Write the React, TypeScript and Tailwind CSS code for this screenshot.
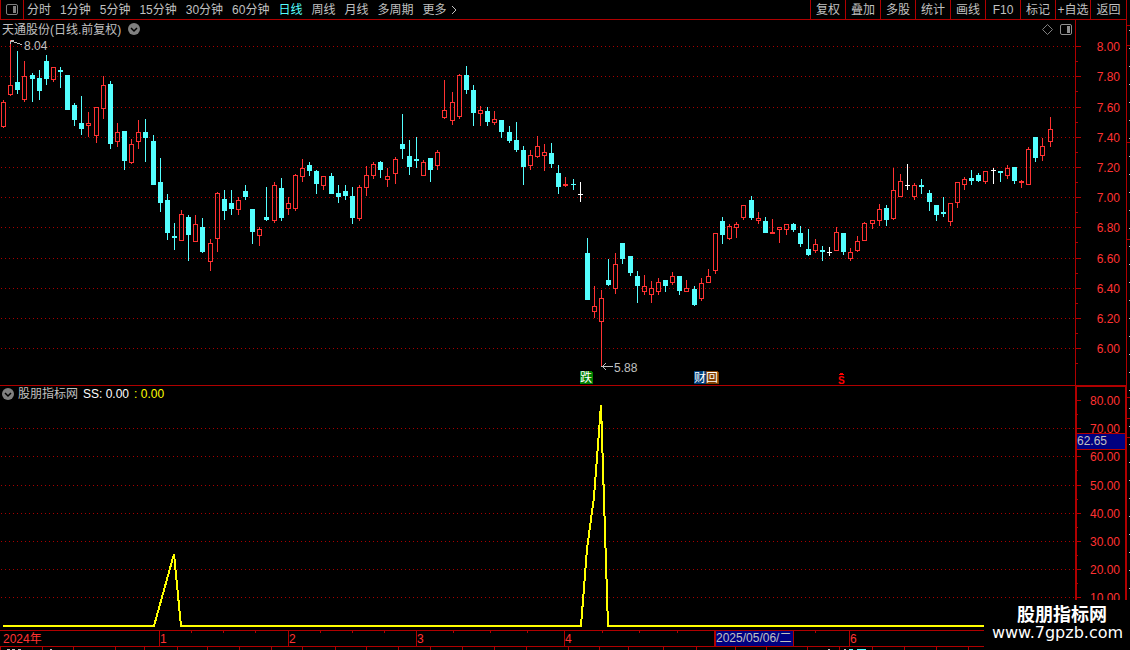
import { useState } from "react";

type Kind = "up" | "down" | "flat";
// high, body top, body bottom, low (chart pixels)
type Candle = [number, number, number, number, Kind];

const FONT =
  "font-['Liberation_Sans','Noto_Sans_CJK_SC',sans-serif] text-[12px]";

const CANDLES: Candle[] = [
  [100, 102, 127, 128, "up"], [40, 85, 95, 96, "up"], [51, 82, 90, 94, "down"], [61, 76, 100, 102, "up"],
  [73, 75, 79, 102, "down"], [70, 78, 91, 100, "down"], [55, 61, 79, 85, "down"], [67, 67, 80, 82, "up"],
  [67, 70, 72, 88, "down"], [75, 75, 110, 110, "down"], [103, 105, 120, 126, "down"], [96, 123, 129, 135, "down"],
  [112, 123, 126, 137, "up"], [107, 107, 136, 143, "up"], [76, 85, 109, 119, "up"], [81, 84, 144, 149, "down"],
  [123, 132, 142, 147, "up"], [131, 131, 161, 170, "down"], [139, 144, 163, 164, "up"], [120, 132, 142, 149, "up"],
  [119, 132, 138, 162, "down"], [135, 141, 185, 185, "down"], [158, 182, 203, 212, "down"], [194, 200, 233, 240, "down"],
  [223, 236, 238, 250, "down"], [210, 214, 241, 241, "up"], [215, 217, 235, 261, "down"], [215, 224, 242, 242, "up"],
  [218, 227, 252, 253, "down"], [239, 243, 262, 271, "up"], [192, 193, 239, 252, "up"], [190, 199, 211, 220, "down"],
  [190, 203, 209, 215, "down"], [197, 200, 210, 215, "up"], [185, 191, 197, 200, "down"], [209, 209, 232, 244, "down"],
  [227, 229, 236, 246, "up"], [187, 217, 220, 221, "down"], [182, 185, 221, 223, "up"], [178, 188, 218, 221, "down"],
  [197, 203, 209, 215, "up"], [174, 175, 209, 211, "up"], [159, 168, 177, 182, "up"], [162, 165, 171, 176, "down"],
  [170, 171, 184, 194, "down"], [176, 176, 186, 190, "up"], [173, 176, 194, 194, "down"], [185, 193, 197, 203, "down"],
  [185, 191, 196, 200, "down"], [187, 196, 218, 224, "down"], [185, 187, 219, 221, "up"], [166, 175, 188, 196, "up"],
  [162, 164, 176, 179, "up"], [161, 162, 170, 178, "down"], [168, 176, 180, 187, "up"], [157, 159, 174, 184, "up"],
  [114, 144, 149, 159, "down"], [140, 156, 167, 175, "down"], [137, 159, 161, 168, "down"], [160, 162, 176, 176, "up"],
  [158, 158, 170, 182, "down"], [150, 152, 166, 170, "up"], [80, 110, 118, 119, "up"], [92, 102, 121, 125, "up"],
  [74, 75, 117, 119, "up"], [66, 75, 90, 94, "down"], [85, 90, 113, 126, "down"], [106, 110, 114, 126, "up"],
  [107, 111, 122, 126, "down"], [111, 119, 123, 125, "up"], [120, 120, 132, 138, "down"], [126, 132, 141, 143, "down"],
  [122, 140, 150, 152, "down"], [146, 150, 167, 185, "down"], [150, 155, 166, 170, "up"], [136, 146, 157, 158, "up"],
  [144, 152, 156, 171, "up"], [143, 153, 164, 168, "down"], [165, 173, 187, 194, "down"], [177, 184, 186, 187, "up"],
  [179, 184, 185, 190, "down"], [182, 194, 195, 202, "flat"], [238, 253, 300, 300, "down"], [286, 306, 312, 318, "up"],
  [290, 298, 322, 367, "up"], [259, 280, 285, 286, "down"], [253, 264, 289, 294, "up"], [243, 243, 259, 264, "down"],
  [256, 256, 273, 276, "down"], [271, 276, 286, 303, "down"], [275, 286, 292, 295, "up"], [281, 288, 295, 303, "up"],
  [278, 282, 292, 295, "up"], [280, 280, 286, 292, "down"], [272, 276, 283, 285, "up"], [276, 276, 291, 295, "down"],
  [280, 288, 292, 292, "up"], [286, 289, 305, 306, "down"], [278, 283, 299, 301, "up"], [269, 276, 283, 283, "up"],
  [233, 233, 271, 274, "up"], [217, 221, 235, 244, "down"], [224, 226, 239, 240, "up"], [222, 224, 228, 238, "up"],
  [205, 205, 218, 220, "up"], [196, 200, 218, 220, "down"], [212, 218, 221, 224, "up"], [217, 221, 233, 233, "down"],
  [219, 232, 234, 234, "up"], [227, 227, 230, 243, "up"], [224, 224, 230, 235, "up"], [223, 224, 230, 232, "down"],
  [226, 233, 244, 247, "down"], [229, 249, 255, 256, "down"], [239, 244, 251, 253, "up"], [246, 250, 252, 261, "down"],
  [247, 252, 253, 256, "flat"], [227, 232, 251, 251, "up"], [233, 233, 252, 255, "down"], [248, 252, 259, 261, "up"],
  [236, 241, 251, 252, "up"], [222, 223, 241, 241, "up"], [220, 220, 224, 229, "up"], [204, 209, 221, 226, "up"],
  [205, 208, 220, 226, "down"], [168, 190, 219, 220, "up"], [174, 181, 197, 197, "up"], [164, 185, 186, 190, "flat"],
  [183, 185, 197, 200, "up"], [179, 185, 187, 194, "down"], [190, 193, 202, 211, "down"], [205, 205, 215, 221, "down"],
  [197, 212, 214, 217, "down"], [203, 203, 222, 226, "up"], [182, 182, 203, 208, "up"], [177, 179, 185, 190, "up"],
  [170, 178, 181, 185, "down"], [173, 175, 181, 182, "down"], [171, 171, 182, 184, "up"], [168, 170, 171, 184, "flat"],
  [171, 171, 173, 182, "down"], [165, 168, 176, 179, "up"], [167, 167, 181, 184, "down"], [180, 181, 183, 188, "up"],
  [147, 149, 185, 185, "up"], [137, 137, 158, 162, "down"], [138, 146, 156, 161, "up"], [117, 129, 142, 147, "up"],
];

const COLORS = { up: "#ff3232", down: "#54ffff", flat: "#ffffff" };

const PRICE_TICKS: [number, string][] = [
  [46, "8.00"], [76, "7.80"], [107, "7.60"], [137, "7.40"], [167, "7.20"], [197, "7.00"],
  [227, "6.80"], [258, "6.60"], [288, "6.40"], [318, "6.20"], [348, "6.00"],
];

const VALUE_TICKS: [number, string][] = [
  [400, "80.00"], [428, "70.00"], [456, "60.00"], [485, "50.00"],
  [513, "40.00"], [541, "30.00"], [569, "20.00"], [597, "10.00"],
];

const MINUTES = ["分时", "1分钟", "5分钟", "15分钟", "30分钟", "60分钟"];
const PERIODS = ["日线", "周线", "月线", "多周期"];
const TOOLS = ["复权", "叠加", "多股", "统计", "画线", "F10", "标记", "+自选", "返回"];

const MONTHS: [number, string][] = [
  [159, "1"], [288, "2"], [416, "3"], [564, "4"], [714, ""], [849, "6"],
];
const WEEKS = [191, 223, 255, 320, 352, 384, 453, 490, 527, 602, 639, 677, 815];
const FOOTER = [0, 42, 73, 115, 144, 177, 207, 239, 271, 302, 335, 366, 398, 430, 462, 494, 526, 568, 599, 628, 663, 696, 735, 766, 807, 839, 872, 904, 936, 968];

function PanelIcon({ className }: { className: string }) {
  return (
    <svg width="12" height="11" className={className} fill="none" stroke="currentColor">
      <rect x="0.5" y="0.5" width="11" height="10" rx="1.5" />
      <rect x="7" y="2" width="3" height="7" fill="currentColor" stroke="none" />
    </svg>
  );
}

function CollapseButton({ label }: { label: string }) {
  return (
    <button aria-label={label} className="shrink-0">
      <svg width="12" height="12" className="block">
        <circle cx="6" cy="6" r="6" fill="#808080" />
        <path d="M3 5l3 3 3-3" fill="none" stroke="#000" strokeWidth="1.5" />
      </svg>
    </button>
  );
}

function GridLine({ y }: { y: number }) {
  return (
    <line x1="1" x2="100%" y1={y + 0.5} y2={y + 0.5} stroke="#a80000" strokeDasharray="1 3" />
  );
}

function CandleBar({ candle, index }: { candle: Candle; index: number }) {
  const [high, top, bottom, low, kind] = candle;
  const x = Math.floor(3.56 + 7.119 * index);
  const color = COLORS[kind];

  if (kind === "up" && bottom - top > 2) {
    return (
      <g fill={color}>
        <rect x={x} y={high} width="1" height={top - high} />
        <rect x={x} y={bottom} width="1" height={low - bottom} />
        <rect x={x - 1.5} y={top + 0.5} width="4" height={bottom - top - 1} fill="none" stroke={color} />
      </g>
    );
  }
  return (
    <g fill={color}>
      <rect x={x} y={high} width="1" height={low - high} />
      <rect x={x - 2} y={top} width="5" height={bottom - top} />
    </g>
  );
}

function Badge({ x, text, color }: { x: number; text: string; color: string }) {
  return (
    <g>
      <path d={`M${x} 371h11l2 2v11h-13z`} fill={color} />
      <text x={x} y="382" fill="#fff">{text}</text>
    </g>
  );
}

function PriceChart() {
  return (
    <svg className="block h-[347px] w-full" shapeRendering="crispEdges" role="img" aria-label="日线">
      <g transform="translate(0 -38)">
        {PRICE_TICKS.map(([y]) => <GridLine key={y} y={y} />)}
        {CANDLES.map((c, i) => <CandleBar key={i} candle={c} index={i} />)}

        {/* highest and lowest price */}
        <g fill="#c0c0c0">
          <path d="M11 40h3v1h-3zM10 41h4v1h-4zM10 42h1v2h-1zM14 42h3v1h-3zM17 43h3v1h-3zM20 44h2v1h-2z" />
          <path d="M601 366h12v1h-12zM603 365h1v3h-1zM604 364h1v1h-1zM604 368h1v1h-1zM605 363h1v1h-1zM605 369h1v1h-1z" />
        </g>
        <text x="24" y="50" fill="#c0c0c0">8.04</text>
        <text x="614" y="372" fill="#c0c0c0">5.88</text>

        {/* event markers */}
        <Badge x={580} text="跌" color="#008000" />
        <Badge x={694} text="财" color="#003c78" />
        <Badge x={706} text="回" color="#804000" />
        <path d="M839 375v-1h1v-1h3v1h1v1z" fill="#ff0000" />
        <text x="838" y="384" fill="#ff0000" className="text-[10px] font-bold">S</text>
      </g>
    </svg>
  );
}

function PriceAxis() {
  return (
    <svg className="block h-[365px] w-full" shapeRendering="crispEdges">
      <g transform="translate(0 -20)">
        {PRICE_TICKS.map(([y, label]) => (
          <g key={y} fill="#b00000">
            <rect y={y} width="5" height="1" />
            <rect y={y + 15} width="2" height="1" />
            <text x="44" y={y + 5} textAnchor="end" fill="#ff3232">{label}</text>
          </g>
        ))}
      </g>
    </svg>
  );
}

function IndicatorChart() {
  return (
    <svg className="block h-[228px] w-full" shapeRendering="crispEdges" role="img" aria-label="SS">
      <g transform="translate(0 -402)">
        {VALUE_TICKS.slice(1).map(([y]) => <GridLine key={y} y={y} />)}
        <polyline
          points="3,626 154,626 174,554 181,626 581,626 587,549 594,497 601,405 608,626 1075,626"
          fill="none"
          stroke="#ffff00"
          strokeWidth="2"
        />
      </g>
    </svg>
  );
}

function IndicatorAxis() {
  return (
    <svg className="block h-[243px] w-full" shapeRendering="crispEdges">
      <g transform="translate(0 -387)">
        {VALUE_TICKS.map(([y, label]) => (
          <g key={y} fill="#b00000">
            <rect y={y} width="4" height="1" />
            <rect y={y + 14} width="1" height="1" />
            <text x="43" y={y + 5} textAnchor="end" fill="#ff3232">{label}</text>
          </g>
        ))}
      </g>
    </svg>
  );
}

function TimeAxis() {
  return (
    <svg className="block h-[15px] w-full" shapeRendering="crispEdges">
      <text x="3" y="12" fill="#ff3232">2024年</text>
      {MONTHS.map(([x, label]) => (
        <g key={x}>
          <rect x={x} width="1" height="15" fill="#b00000" />
          <text x={x + 1} y="12" fill="#ff3232">{label}</text>
        </g>
      ))}
      {WEEKS.map((x) => <rect key={x} x={x} width="1" height="2" fill="#b00000" />)}
      <rect x="714" width="80" height="15" fill="#b00000" />
      <rect x="716" width="77" height="15" fill="#000080" />
      <text x="716" y="11" fill="#c0c0c0">2025/05/06/二</text>
    </svg>
  );
}

function SideStrip() {
  const marks = Array.from({ length: 34 }, (_, i) => 30 + i * 18);
  return (
    <aside className="w-1 shrink-0 border-l border-[#b00000]">
      <svg className="block h-[650px] w-full" shapeRendering="crispEdges">
        {[25, 45, 142, 239, 397, 418, 437].map((y) => (
          <rect key={y} y={y} width="3" height="1" fill="#b00000" />
        ))}
        {marks.map((y) => <rect key={y} x="2" y={y} width="1" height="1" fill="#c0c0c0" />)}
      </svg>
    </aside>
  );
}

export default function App() {
  const [period, setPeriod] = useState("日线");

  const periodButton = (name: string) => (
    <button
      key={name}
      onClick={() => setPeriod(name)}
      className={name === period ? "text-[#54ffff]" : "text-[#c0c0c0]"}
    >
      {name}
    </button>
  );

  return (
    <div className={`relative flex min-h-screen overflow-hidden whitespace-nowrap bg-black leading-4 text-[#c0c0c0] ${FONT}`}>
      <main className="flex min-w-0 flex-1 flex-col">
        <header className="flex h-5 border-b border-[#b00000]">
          <button aria-label="侧栏" className="flex w-6 items-center justify-center border-x border-[#b00000] pr-px">
            <PanelIcon className="text-[#808080]" />
          </button>
          <nav className="flex flex-1 items-center gap-[9px] pl-[3px]">
            {MINUTES.map(periodButton)}
            <div className="flex items-center gap-[9px]">
              {PERIODS.map(periodButton)}
              <button className="flex items-center gap-1">
                更多
                <svg width="6" height="10" fill="none" stroke="currentColor">
                  <path d="M1 1l4 4-4 4" />
                </svg>
              </button>
            </div>
          </nav>
          <div className="flex">
            {TOOLS.map((tool) => (
              <button key={tool} className="w-[35px] border-l border-[#b00000] text-center last:w-9">
                {tool}
              </button>
            ))}
          </div>
        </header>

        <section className="flex border-b border-[#b00000]">
          <div className="min-w-0 flex-1">
            <div className="flex h-[18px] items-center gap-[7px] pl-[2px] pr-[3px]">
              <h1 className="pt-px">天通股份(日线.前复权)</h1>
              <CollapseButton label="股票菜单" />
              <div className="ml-auto flex items-center gap-[7px] text-[#808080]">
                <svg width="11" height="11" fill="none" stroke="currentColor">
                  <path d="M5.500 0.500l5 5-5 5-5-5z" />
                </svg>
                <PanelIcon className="text-[#909090]" />
              </div>
            </div>
            <PriceChart />
          </div>
          <div className="w-[51px] border-l border-[#b00000]">
            <PriceAxis />
          </div>
        </section>

        <section className="flex">
          <div className="min-w-0 flex-1">
            <div className="flex h-4 items-center gap-1 pl-[2px]">
              <CollapseButton label="指标菜单" />
              <h2>股朋指标网</h2>
              <span className="px-px text-white">SS: 0.00</span>
              <span className="text-[#ffff00]">: 0.00</span>
            </div>
            <IndicatorChart />
          </div>
          <div className="relative w-[51px] border-l-2 border-r border-t border-[#b00000]">
            <IndicatorAxis />
            <div className="absolute inset-x-0 top-[46px] border-y border-[#b00000] bg-[#000080] leading-[15px]">
              62.65
            </div>
          </div>
        </section>

        <footer>
          <div className="border-y border-[#b00000]">
            <TimeAxis />
          </div>
          <svg className="block h-[3px] w-full" shapeRendering="crispEdges">
            {FOOTER.map((x) => <rect key={x} x={x} width="1" height="3" fill="#b00000" />)}
            <path d="M7 2h3M12 2h3M18 2h3M50 2h2M828 2h2M844 2h2" stroke="#c0c0c0" />
            <path d="M849 2h4M857 2h9" stroke="#54ffff" />
          </svg>
        </footer>
      </main>
      <SideStrip />

      {/* site watermark */}
      <div className="absolute bottom-0 right-0 flex h-[50px] w-[146px] flex-col items-center bg-black pt-[5px] text-white">
        <strong className="pl-[10px] text-[18px] leading-5">股朋指标网</strong>
        <a href="#" className="pl-px font-['DejaVu_Sans',sans-serif] text-[16px] leading-4">
          www.7gpzb.com
        </a>
      </div>
    </div>
  );
}
